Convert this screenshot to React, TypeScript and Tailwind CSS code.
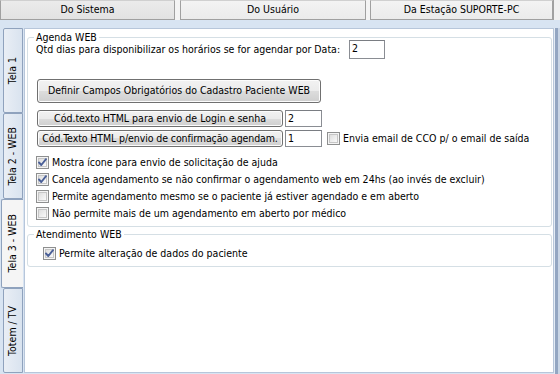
import React from "react";

function CheckBox({ checked }: { checked?: boolean }) {
  return (
    <svg width="13" height="13" viewBox="0 0 13 13" className="shrink-0">
      <defs>
        <linearGradient id="cbg" x1="0" y1="0" x2="1" y2="1">
          <stop offset="0" stopColor="#dcdcdc" />
          <stop offset="1" stopColor="#fbfbfb" />
        </linearGradient>
      </defs>
      <rect x="0.5" y="0.5" width="12" height="12" fill="#f4f4f4" stroke="#8e8f8f" />
      <rect x="2.5" y="2.5" width="8" height="8" fill="url(#cbg)" stroke="#c6c6c6" />
      {checked && (
        <path d="M3 6.5 L5.3 9 L10 3.2" fill="none" stroke="#4a5f97" strokeWidth="1.9" strokeLinecap="round" strokeLinejoin="round" />
      )}
    </svg>
  );
}

function Check({ checked, label, className = "" }: { checked?: boolean; label: string; className?: string }) {
  return (
    <div className={`flex items-center h-[17px] whitespace-nowrap ${className}`}>
      <CheckBox checked={checked} />
      <span className="ml-[3px]">{label}</span>
    </div>
  );
}

function Btn({ children, className = "" }: { children: React.ReactNode; className?: string }) {
  return (
    <div
      className={`flex items-center justify-center whitespace-nowrap overflow-hidden border border-[#707070] rounded-[3px] bg-[linear-gradient(#f2f2f2_0%,#ebebeb_50%,#dddddd_50%,#cfcfcf_100%)] shadow-[inset_0_0_0_1px_#fcfcfc] ${className}`}
    >
      {children}
    </div>
  );
}

function Input({ value, className = "" }: { value: string; className?: string }) {
  return (
    <div className={`bg-white border border-[#8a8d93] border-t-[#7a7d83] pl-[2px] leading-[14px] ${className}`}>{value}</div>
  );
}

function VTab({ label, selected, className = "" }: { label: string; selected?: boolean; className?: string }) {
  return (
    <div
      className={`flex items-center justify-center border border-[#8fa2bd] rounded-l-[2px] ${
        selected
          ? "bg-[#f5f5f5] border-r-0 w-[22px] ml-[-1px] z-10"
          : "bg-[linear-gradient(90deg,#e9eef5,#d9e3ef)] w-[20px]"
      } ${className}`}
    >
      <span className="[writing-mode:vertical-rl] rotate-180 whitespace-nowrap">{label}</span>
    </div>
  );
}

export default function App() {
  return (
    <div className="w-[560px] h-[374px] overflow-hidden bg-[#d8e4f2] flex flex-col text-[10.5px] text-black font-['DejaVu_Sans_Condensed','Liberation_Sans',Arial,sans-serif]">
      {/* top tabs */}
      <div className="h-[20px] flex bg-[#f0f0f0] shrink-0">
        <div className="w-[175px] flex items-center justify-center border border-[#a0a0a0] border-t-[#d0d0d0] bg-[linear-gradient(#ebebeb,#e2e2e2)]">
          Do Sistema
        </div>
        <div className="w-[5px] bg-[#f4f4f4]" />
        <div className="w-[186px] flex items-center justify-center border border-[#a0a0a0] border-t-[#d0d0d0] bg-[linear-gradient(#f3f3f3,#ebebeb)]">
          Do Usuário
        </div>
        <div className="w-[4px] bg-[#f4f4f4]" />
        <div className="w-[183px] flex items-center justify-center border border-[#a0a0a0] border-t-[#d0d0d0] bg-[linear-gradient(#f3f3f3,#ebebeb)]">
          Da Estação SUPORTE-PC
        </div>
        <div className="flex-1 bg-[#f0f0f0] border-l border-[#a0a0a0]" />
      </div>
      {/* band */}
      <div className="h-[8px] shrink-0 bg-[#d8e4f2]" />
      {/* body */}
      <div className="flex-1 flex min-h-0">
        {/* left vertical tabs */}
        <div className="w-[24px] shrink-0 flex flex-col pl-[3px]">
          <VTab label="Tela 1" className="h-[85px]" />
          <VTab label="Tela 2 - WEB" className="h-[86px]" />
          <VTab label="Tela 3 - WEB" selected className="h-[89px] ml-[-2px]" />
          <VTab label="Totem / TV" className="h-[85px]" />
        </div>
        {/* panel */}
        <div className="flex-1 bg-white border border-[#b7c6da] mb-[1px] pl-[2px] pt-[3px] pr-[1px]">
          <fieldset className="border border-[#d5dfe5] rounded-[3px] pl-[6px] pb-[4px]">
            <legend className="px-[2px] leading-[11px]">Agenda WEB</legend>
            <div className="ml-[2px]">
              <div className="flex items-center mt-[-3px] h-[19px]">
                <span className="whitespace-nowrap w-[313px]">Qtd dias para disponibilizar os horários se for agendar por Data:</span>
                <Input value="2" className="w-[36px] h-[19px]" />
              </div>
              <Btn className="w-[284px] h-[24px] ml-[1px] mt-[20px]">
                Definir Campos Obrigatórios do Cadastro Paciente WEB
              </Btn>
              <div className="flex items-center mt-[7px] ml-[1px]">
                <Btn className="w-[246px] h-[17px]">Cód.texto HTML para envio de Login e senha</Btn>
                <Input value="2" className="w-[37px] h-[17px] ml-[2px]" />
              </div>
              <div className="flex items-center mt-[3px] ml-[1px]">
                <Btn className="w-[246px] h-[17px] tracking-[-0.1px]">Cód.Texto HTML p/envio de confirmação agendam.</Btn>
                <Input value="1" className="w-[37px] h-[17px] ml-[2px]" />
                <Check label="Envia email de CCO p/ o email de saída" className="ml-[5px]" />
              </div>
              <div className="mt-[7px]">
                <Check checked label="Mostra ícone para envio de solicitação de ajuda" />
                <Check checked label="Cancela agendamento se não confirmar o agendamento web em 24hs (ao invés de excluir)" />
                <Check label="Permite agendamento mesmo se o paciente já estiver agendado e em aberto" />
                <Check label="Não permite mais de um agendamento em aberto por médico" />
              </div>
            </div>
          </fieldset>
          <fieldset className="border border-[#d5dfe5] rounded-[3px] pl-[6px] pb-[4px] mt-[2px]">
            <legend className="px-[2px] leading-[11px]">Atendimento WEB</legend>
            <div className="ml-[9px] mt-[5px]">
              <Check checked label="Permite alteração de dados do paciente" />
            </div>
          </fieldset>
        </div>
        {/* right window edge */}
        <div className="w-[6px] shrink-0 flex">
          <div className="w-[1px] bg-[#e4ecf5]" />
          <div className="w-[3px] bg-[#93a6c2]" />
          <div className="w-[2px] bg-[#c9d5e5]" />
        </div>
      </div>
    </div>
  );
}
